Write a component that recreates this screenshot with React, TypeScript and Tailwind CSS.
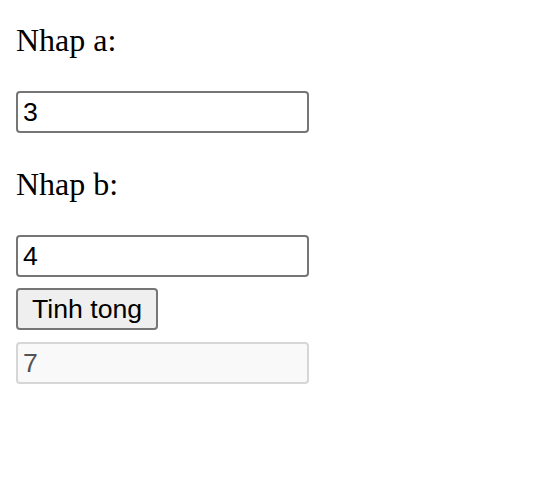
import React from "react";

export default function App() {
  return (
    <div className="bg-white w-[560px] h-[488px] pl-[16px] pt-[22px] flex flex-col items-start">
      <p className="font-['Liberation_Serif',serif] text-[32px] leading-[37px] text-black">Nhap a:</p>
      <input
        type="text"
        defaultValue="3"
        className="mt-[32px] w-[293px] h-[42px] border-2 border-[#767676] rounded-[4px] bg-white px-[5px] font-['Liberation_Sans',Arial,sans-serif] text-[26.67px] text-black outline-none"
      />
      <p className="mt-[33px] font-['Liberation_Serif',serif] text-[32px] leading-[37px] text-black">Nhap b:</p>
      <input
        type="text"
        defaultValue="4"
        className="mt-[32px] w-[293px] h-[42px] border-2 border-[#767676] rounded-[4px] bg-white px-[5px] font-['Liberation_Sans',Arial,sans-serif] text-[26.67px] text-black outline-none"
      />
      <button className="mt-[11px] h-[42px] px-[14px] border-2 border-[#767676] rounded-[4px] bg-[#efefef] font-['Liberation_Sans',Arial,sans-serif] text-[26.67px] leading-none text-black">
        Tinh tong
      </button>
      <input
        type="text"
        value="7"
        disabled
        readOnly
        className="mt-[12px] w-[293px] h-[42px] border-2 border-[#d6d6d6] rounded-[4px] bg-[#f9f9f9] px-[5px] font-['Liberation_Sans',Arial,sans-serif] text-[26.67px] text-[#545454] outline-none"
      />
    </div>
  );
}
